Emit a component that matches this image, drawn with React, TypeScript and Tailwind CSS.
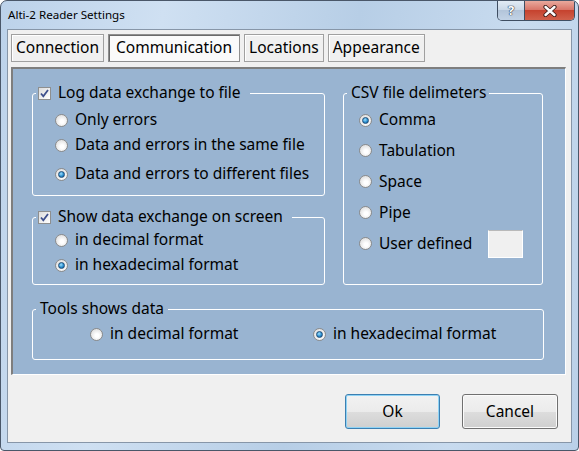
import React from "react";

const FONT = "font-['Noto_Sans',sans-serif]";

function Radio({ checked }: { checked?: boolean }) {
  return (
    <span className="flex h-[13px] w-[13px] shrink-0 items-center justify-center rounded-full border border-[#8b8b8b] bg-[radial-gradient(circle_at_55%_60%,#ffffff_20%,#d2d2d2_100%)]">
      {checked && (
        <span className="h-[7px] w-[7px] rounded-full border border-[#1f4d78] bg-[radial-gradient(circle_at_40%_35%,#9fe0ff,#2b8fcf_55%,#0d4f86)]" />
      )}
    </span>
  );
}

function Check() {
  return (
    <span className="flex h-[13px] w-[13px] shrink-0 items-center justify-center border border-[#8e8f8f] bg-[linear-gradient(135deg,#dcdcdc,#ffffff)]">
      <svg width="11" height="11" viewBox="0 0 11 11">
        <path d="M2 5.5 L4.3 8.3 L9 2" fill="none" stroke="#3d4f8c" strokeWidth="1.8" />
      </svg>
    </span>
  );
}

function RadioRow({ label, checked, h = "h-[24px]" }: { label: string; checked?: boolean; h?: string }) {
  return (
    <div className={`flex items-center gap-[7px] ${h}`}>
      <Radio checked={checked} />
      <span>{label}</span>
    </div>
  );
}

function Tab({ label, active }: { label: string; active?: boolean }) {
  return (
    <div
      className={
        active
          ? "flex h-[28px] items-center border border-[#8f8f8f] bg-[#fafafa] px-[7px] shadow-[inset_1px_1px_0_#6a6a6a]"
          : "flex h-[28px] items-center border border-[#a0a0a0] bg-[#f0f0f0] px-[4px] shadow-[inset_1px_1px_0_#ffffff]"
      }
    >
      {label}
    </div>
  );
}

function Button({ label, focused }: { label: string; focused?: boolean }) {
  return (
    <div
      className={`flex h-[35px] items-center justify-center rounded-[3px] border bg-[linear-gradient(#f2f2f2,#ebebeb_50%,#dddddd_51%,#cfcfcf)] ${
        focused ? "w-[95px] border-[#3c7fb1] shadow-[inset_0_0_0_1px_#8fd3f5]" : "w-[96px] border-[#707070] shadow-[inset_0_0_0_1px_#fbfbfb]"
      }`}
    >
      {label}
    </div>
  );
}

export default function App() {
  return (
    <div className={`flex h-[451px] w-[579px] flex-col overflow-hidden rounded-t-[7px] rounded-b-[4px] border border-[#4a5769] bg-[linear-gradient(100deg,#bcd2ea,#cfe0f2_25%,#b7cee6_55%,#c8dbef_80%,#bad0e8)] ${FONT}`}>
      {/* title bar */}
      <div className="flex h-[28px] shrink-0 items-start justify-between">
        <span className="mt-[5px] pl-[7px] text-[11.6px] text-black">Alti-2 Reader Settings</span>
        <div className="mr-[3px] flex h-[20px] overflow-hidden rounded-b-[5px] border border-t-0 border-[#3f4e62]">
          <div className="flex w-[27px] items-center justify-center border-r border-[#3f4e62] bg-[linear-gradient(#e2ebf5,#cbd9e8_45%,#b3c5da_50%,#c2d3e6)]">
            <span className="text-[13px] font-bold leading-none text-white [text-shadow:0_0_1px_#26344a,0_0_1px_#26344a,0_0_1px_#26344a]">?</span>
          </div>
          <div className="flex w-[49px] items-center justify-center bg-[linear-gradient(#e9a99d,#d9776a_45%,#c6432f_50%,#d0614c)]">
            <svg width="16" height="12" viewBox="0 0 16 12">
              <path d="M3.5 2 L12.5 10 M12.5 2 L3.5 10" stroke="#3b1d1a" strokeWidth="4.2" strokeLinecap="round" />
              <path d="M3.5 2 L12.5 10 M12.5 2 L3.5 10" stroke="#ffffff" strokeWidth="2.4" strokeLinecap="round" />
            </svg>
          </div>
        </div>
      </div>

      {/* client area */}
      <div className="mx-[6px] h-[414px] shrink-0 border border-[#8796a8] bg-[#f0f0f0] text-[15.5px] text-black">
        <div className="mt-[4px] flex h-[28px] gap-[4px] pl-[3px]">
          <Tab label="Connection" />
          <Tab label="Communication" active />
          <Tab label="Locations" />
          <Tab label="Appearance" />
        </div>

        {/* panel */}
        <div className="ml-[3px] mt-[5px] h-[308px] w-[555px] border-b border-l-2 border-r border-t-2 border-b-white border-l-[#7e7e7e] border-r-white border-t-[#7e7e7e] bg-[#99b4d1] pl-[19px] pt-[14px]">
          <div className="flex gap-[18px]">
            <div className="flex w-[293px] flex-col gap-[11px]">
              <fieldset className="rounded-[3px] border border-white">
                <legend className="ml-[3px] flex h-[20px] items-center gap-[7px] pl-[2px] pr-[9px]">
                  <Check />
                  <span>Log data exchange to file</span>
                </legend>
                <div className="flex flex-col pb-[9px] pl-[22px] pt-[5px]">
                  <RadioRow label="Only errors" />
                  <div className="mt-[1px]">
                    <RadioRow label="Data and errors in the same file" />
                  </div>
                  <div className="mt-[5px]">
                    <RadioRow label="Data and errors to different files" checked />
                  </div>
                </div>
              </fieldset>
              <fieldset className="rounded-[3px] border border-white">
                <legend className="ml-[3px] flex h-[20px] items-center gap-[7px] pl-[2px] pr-[9px]">
                  <Check />
                  <span>Show data exchange on screen</span>
                </legend>
                <div className="flex flex-col gap-[1px] pb-[7px] pl-[22px] pt-[1px]">
                  <RadioRow label="in decimal format" />
                  <RadioRow label="in hexadecimal format" checked />
                </div>
              </fieldset>
            </div>

            <fieldset className="h-[202px] w-[200px] rounded-[3px] border border-white">
              <legend className="ml-[3px] flex h-[20px] items-center pl-[4px] pr-[3px]">CSV file delimeters</legend>
              <div className="flex flex-col pl-[15px] pt-[2px]">
                <RadioRow label="Comma" checked h="h-[30px]" />
                <RadioRow label="Tabulation" h="h-[31px]" />
                <RadioRow label="Space" h="h-[31px]" />
                <RadioRow label="Pipe" h="h-[31px]" />
                <div className="flex h-[31px] items-center gap-[7px]">
                  <Radio />
                  <span className="w-[102px]">User defined</span>
                  <span className="h-[28px] w-[35px] border border-white border-t-[#b9b9b9] bg-[#f0f0f0]" />
                </div>
              </div>
            </fieldset>
          </div>

          <fieldset className="mt-[14px] w-[512px] rounded-[3px] border border-white">
            <legend className="ml-[3px] flex h-[20px] items-center pl-[4px] pr-[4px]">Tools shows data</legend>
            <div className="flex pb-[13px] pl-[57px] pt-[3px]">
              <div className="w-[223px]">
                <RadioRow label="in decimal format" />
              </div>
              <RadioRow label="in hexadecimal format" checked />
            </div>
          </fieldset>
        </div>

        {/* buttons */}
        <div className="mr-[13px] mt-[19px] flex justify-end gap-[22px]">
          <Button label="Ok" focused />
          <Button label="Cancel" />
        </div>
      </div>
    </div>
  );
}
